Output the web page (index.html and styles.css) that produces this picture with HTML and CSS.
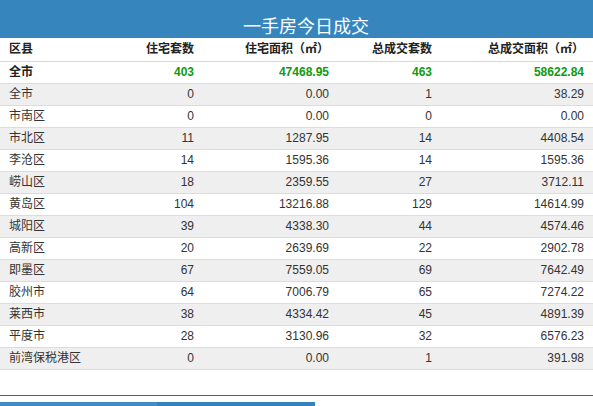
FILE: index.html
```html
<!DOCTYPE html>
<html lang="zh-CN">
<head>
<meta charset="utf-8">
<title>一手房今日成交</title>
<link rel="stylesheet" href="styles.css">
</head>
<body>
<div class="page">
  <header class="title-bar"><h1 class="title">一手房今日成交</h1></header>
  <div class="table">
    <div class="row head">
      <div class="cell name">区县</div><div class="cell">住宅套数</div><div class="cell">住宅面积（㎡）</div><div class="cell">总成交套数</div><div class="cell">总成交面积（㎡）</div>
    </div>
    <div class="row total">
      <div class="cell name">全市</div><div class="cell">403</div><div class="cell">47468.95</div><div class="cell">463</div><div class="cell">58622.84</div>
    </div>
    <div class="row">
      <div class="cell name">全市</div><div class="cell">0</div><div class="cell">0.00</div><div class="cell">1</div><div class="cell">38.29</div>
    </div>
    <div class="row">
      <div class="cell name">市南区</div><div class="cell">0</div><div class="cell">0.00</div><div class="cell">0</div><div class="cell">0.00</div>
    </div>
    <div class="row">
      <div class="cell name">市北区</div><div class="cell">11</div><div class="cell">1287.95</div><div class="cell">14</div><div class="cell">4408.54</div>
    </div>
    <div class="row">
      <div class="cell name">李沧区</div><div class="cell">14</div><div class="cell">1595.36</div><div class="cell">14</div><div class="cell">1595.36</div>
    </div>
    <div class="row">
      <div class="cell name">崂山区</div><div class="cell">18</div><div class="cell">2359.55</div><div class="cell">27</div><div class="cell">3712.11</div>
    </div>
    <div class="row">
      <div class="cell name">黄岛区</div><div class="cell">104</div><div class="cell">13216.88</div><div class="cell">129</div><div class="cell">14614.99</div>
    </div>
    <div class="row">
      <div class="cell name">城阳区</div><div class="cell">39</div><div class="cell">4338.30</div><div class="cell">44</div><div class="cell">4574.46</div>
    </div>
    <div class="row">
      <div class="cell name">高新区</div><div class="cell">20</div><div class="cell">2639.69</div><div class="cell">22</div><div class="cell">2902.78</div>
    </div>
    <div class="row">
      <div class="cell name">即墨区</div><div class="cell">67</div><div class="cell">7559.05</div><div class="cell">69</div><div class="cell">7642.49</div>
    </div>
    <div class="row">
      <div class="cell name">胶州市</div><div class="cell">64</div><div class="cell">7006.79</div><div class="cell">65</div><div class="cell">7274.22</div>
    </div>
    <div class="row">
      <div class="cell name">莱西市</div><div class="cell">38</div><div class="cell">4334.42</div><div class="cell">45</div><div class="cell">4891.39</div>
    </div>
    <div class="row">
      <div class="cell name">平度市</div><div class="cell">28</div><div class="cell">3130.96</div><div class="cell">32</div><div class="cell">6576.23</div>
    </div>
    <div class="row">
      <div class="cell name">前湾保税港区</div><div class="cell">0</div><div class="cell">0.00</div><div class="cell">1</div><div class="cell">391.98</div>
    </div>
  </div>
  <footer class="footer">
    <div class="tabs"><span class="tab tab-a"></span><span class="tab tab-b"></span></div>
  </footer>
</div>
</body>
</html>
```
FILE: styles.css
```css
html, body {
  margin: 0;
  padding: 0;
  background: #fff;
  overflow: hidden;
}
.page {
  width: 593px;
  font-family: "Liberation Sans", "Noto Sans CJK SC", sans-serif;
  font-size: 12px;
  color: #333;
}
.title-bar {
  height: 38px;
  background: #3686bd;
  box-sizing: border-box;
  padding: 13px 0 0 19px;
}
.title {
  margin: 0;
  text-align: center;
  font-size: 18px;
  font-weight: normal;
  line-height: 24px;
  color: #fff;
  font-family: "Noto Sans CJK SC", sans-serif;
}
.table {
  display: flex;
  flex-direction: column;
}
.row {
  display: grid;
  grid-template-columns: 120px 83px 135px 103px 152px;
  height: 21px;
  line-height: 21px;
  border-bottom: 1px solid #dcdcdc;
}
.row:nth-child(odd) {
  background: #efefef;
}
.row.head {
  height: 23px;
  line-height: 23px;
  background: #fff;
  font-weight: bold;
  color: #222;
}
.row.total {
  background: #fff;
  font-weight: bold;
  color: #0f9a0f;
}
.row.total .name {
  color: #222;
}
.cell {
  padding: 0 9px;
  text-align: right;
  white-space: nowrap;
}
.cell.name {
  text-align: left;
}
.footer {
  margin-top: 25px;
  border-top: 1px solid #2c6b98;
  padding-top: 6px;
}
.tabs {
  display: flex;
  height: 4px;
}
.tab {
  width: 157px;
  height: 4px;
}
.tab-a {
  background: #3f8dc3;
}
.tab-b {
  width: 158px;
  background: #3484bc;
}
```
